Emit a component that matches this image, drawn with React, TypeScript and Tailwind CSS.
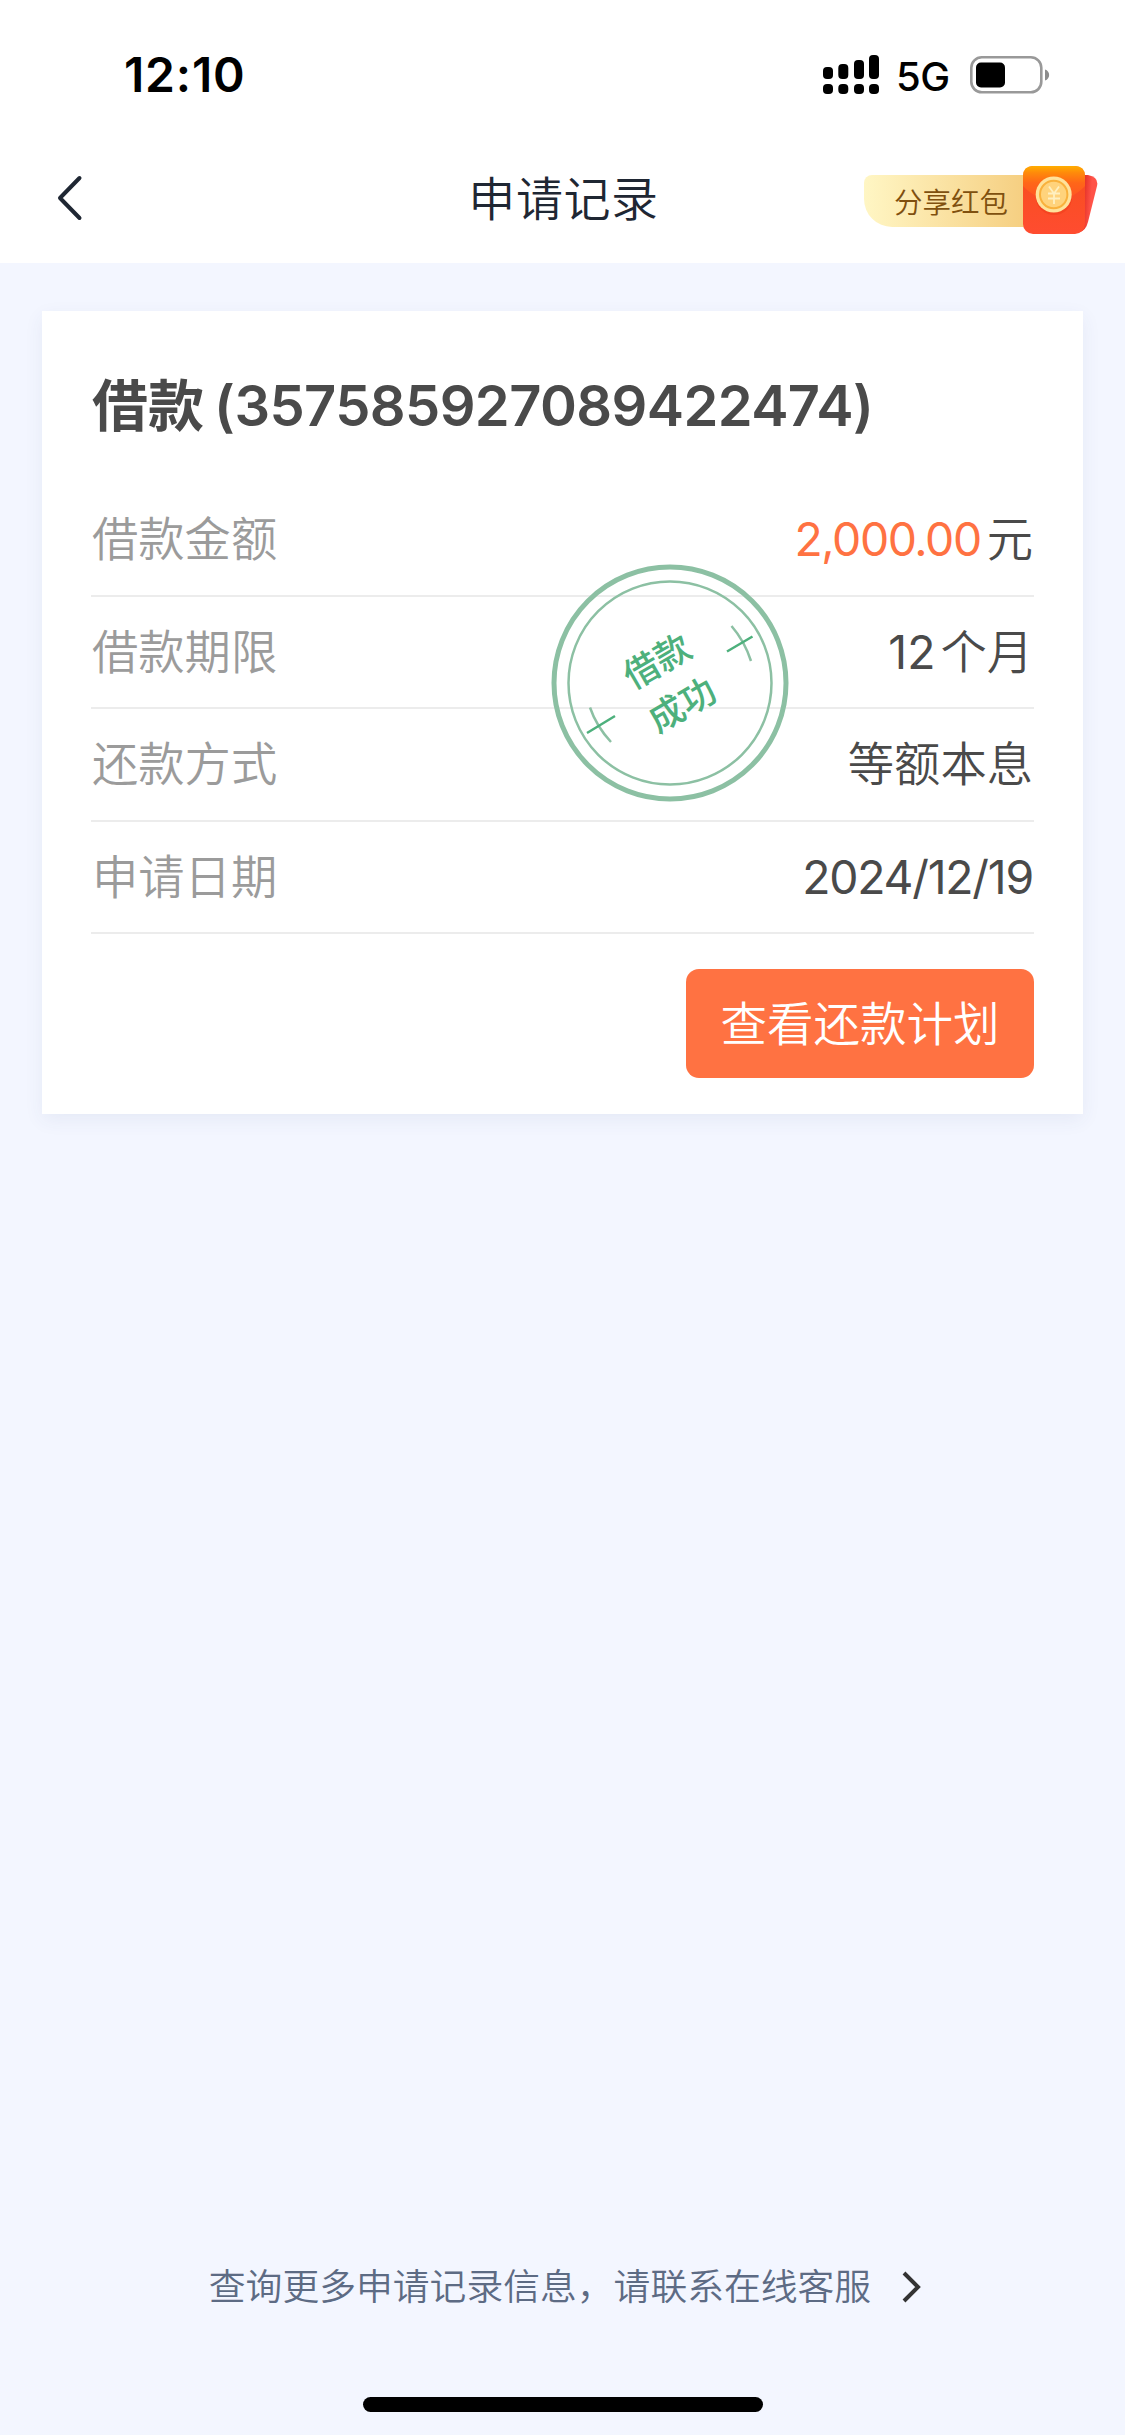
import React from "react";

interface Detail {
  label: string;
  value: React.ReactNode;
}

const details: Detail[] = [
  {
    label: "借款金额",
    value: (
      <>
        <span className="mr-[6px] font-normal tracking-[-1.4px] text-[#ff7242]">
          2,000.00
        </span>
        元
      </>
    ),
  },
  {
    label: "借款期限",
    value: (
      <>
        <span className="mr-[5px] font-normal">12</span>个月
      </>
    ),
  },
  { label: "还款方式", value: "等额本息" },
  {
    label: "申请日期",
    value: (
      <span className="font-normal tracking-[-1.2px]">2024/12/19</span>
    ),
  },
];

const StatusBar = () => (
  <div className="flex h-[150px] items-center justify-between pr-[75px] pl-[124px]">
    <span className="text-[48px] leading-none font-semibold tracking-[0.8px] text-black">
      12:10
    </span>
    <div className="flex items-center">
      <svg width="56" height="40" viewBox="0 0 56 40">
        <rect x="0" y="12" width="10" height="12" rx="4" />
        <rect x="15.3" y="9" width="10" height="15" rx="4" />
        <rect x="31" y="5" width="10" height="19" rx="4" />
        <rect x="46" y="0" width="10" height="24" rx="4" />
        <rect x="0" y="29" width="10" height="10" rx="4" />
        <rect x="15.3" y="29" width="10" height="10" rx="4" />
        <rect x="31" y="29" width="10" height="10" rx="4" />
        <rect x="46" y="29" width="10" height="10" rx="4" />
      </svg>
      <span className="mt-1 ml-[17px] w-[55px] text-[40px] leading-none font-medium tracking-[-0.6px] whitespace-nowrap text-black">
        5G
      </span>
      <svg className="ml-[19px]" width="80" height="38" viewBox="0 0 80 38">
        <rect
          x="1.3"
          y="1.3"
          width="70"
          height="35"
          rx="10.5"
          fill="none"
          stroke="#999"
          strokeWidth="2.6"
        />
        <rect x="6" y="6.5" width="29" height="25" rx="5" />
        <path d="M75 13.500c5.500 1.500 5.500 9.500 0 11z" fill="#8c8c8c" />
      </svg>
    </div>
  </div>
);

const RedPacketIcon = () => (
  <svg
    className="absolute top-0 right-0"
    width="76"
    height="69"
    viewBox="0 0 76 69"
  >
    <defs>
      <linearGradient id="body" x1="0" y1="0" x2="0" y2="1">
        <stop offset="0" stopColor="#ff5a1c" />
        <stop offset="0.3" stopColor="#f94e22" />
        <stop offset="1" stopColor="#ff4c30" />
      </linearGradient>
      <linearGradient id="flap" x1="0" y1="0" x2="0" y2="1">
        <stop offset="0" stopColor="#ffae00" />
        <stop offset="0.2" stopColor="#ff8a0a" />
        <stop offset="0.5" stopColor="#ff6618" />
        <stop offset="1" stopColor="#ff5226" />
      </linearGradient>
      <linearGradient id="back" x1="0" y1="0" x2="1" y2="0.2">
        <stop offset="0.2" stopColor="#e02c22" />
        <stop offset="0.7" stopColor="#ff5348" />
      </linearGradient>
    </defs>
    <path d="M58 9h8q11 2 9 11L66 56q-2 8-8 10z" fill="url(#back)" />
    <rect x="1" y="0" width="62" height="68" rx="10" fill="url(#body)" />
    <path
      d="M1 20V10Q1 0 11 0H53Q63 0 63 10V20Q50 34 32 34T1 20z"
      fill="url(#flap)"
    />
    <ellipse cx="32" cy="32" rx="18" ry="17" fill="#e83410" opacity="0.35" />
    <circle cx="31.7" cy="28.5" r="18" fill="#ffe29a" />
    <circle
      cx="31.7"
      cy="28.5"
      r="13.7"
      fill="#ffd37c"
      stroke="#f9b13c"
      strokeWidth="2"
    />
    <path
      d="M27 20.500l5 7 5-7M32 27v11M26 27.500h12M26 32.500h12"
      fill="none"
      stroke="#fff0c0"
      strokeWidth="1.8"
    />
  </svg>
);

const NavBar = () => (
  <div className="grid h-[113px] grid-cols-3 items-start">
    <svg
      className="mt-[24px] ml-[56px]"
      width="28"
      height="48"
      viewBox="0 0 28 48"
      fill="none"
      stroke="#1f2733"
      strokeWidth="4"
      strokeLinecap="round"
      strokeLinejoin="round"
    >
      <path d="M23.500 4L4 24l19.500 20" />
    </svg>
    <h1 className="mt-[14px] pl-[2px] text-center text-[47px] leading-[70px] font-[350] tracking-[0.6px] text-[#1f2733]">
      申请记录
    </h1>
    <div className="relative mt-4 mr-[27px] h-[69px] w-[234px] justify-self-end pt-[9px]">
      <div className="h-[52px] w-[180px] rounded-tl-[8px] rounded-bl-[28px] bg-linear-to-r from-[#fff6c4] to-[#f4ca78] pt-px pl-[30px] text-[28.5px] leading-[53px] font-[350] text-[#80500f]">
        分享红包
      </div>
      <RedPacketIcon />
    </div>
  </div>
);

const Stamp = () => (
  <div className="absolute top-[252px] left-[508px] flex h-[240px] w-[240px] items-center justify-center">
    <svg
      className="absolute inset-0"
      width="240"
      height="240"
      viewBox="0 0 240 240"
      fill="none"
      stroke="#8cc0a3"
    >
      <circle cx="120" cy="120" r="116" strokeWidth="5" />
      <circle cx="120" cy="120" r="101.5" strokeWidth="2.5" />
      <path d="M181.500 63q13 15 19.500 35" strokeWidth="2.5" />
      <path d="M40 144.500q6.500 19 21 34.500" strokeWidth="2.5" />
      <path
        d="M177 88.500l25.500-15M37 170l28-17"
        stroke="#4db07c"
        strokeWidth="2.5"
      />
    </svg>
    <div className="flex -rotate-30 flex-col gap-[14px] pt-0.5 text-center text-[35.5px] leading-[36px] font-medium text-[#4db07c]">
      <span>借款</span>
      <span>成功</span>
    </div>
  </div>
);

const LoanCard = () => (
  <div className="relative mx-[42px] mt-[48px] h-[803px] bg-white px-[49px] pt-[54px] text-[46.3px] font-[350] text-[#4a4a4a] shadow-[0_6px_18px_rgba(60,70,130,0.07)]">
    <h2 className="h-[119px] pl-px text-[56px] leading-[82px] font-semibold whitespace-nowrap">
      借款{" "}
      <span className="-ml-1 tracking-[-0.6px]">(357585927089422474)</span>
    </h2>
    {details.map((item) => (
      <div
        key={item.label}
        className="flex h-[112.5px] items-center justify-between border-b-2 border-[#ececec] leading-[70px]"
      >
        <span className="pl-px text-[#9b9b9b]">{item.label}</span>
        <span className="pr-px">{item.value}</span>
      </div>
    ))}
    <button className="mt-[35px] ml-auto block h-[109px] w-[348px] rounded-[13px] bg-[#ff7242] pt-0.5 text-[46.5px] leading-[107px] font-[350] text-white">
      查看还款计划
    </button>
    <Stamp />
  </div>
);

const App: React.FC = () => {
  return (
    <div className="flex h-[2435px] w-[1125px] flex-col overflow-hidden bg-[#f3f6ff] font-['Inter','Noto_Sans_CJK_SC',sans-serif]">
      <header className="bg-white">
        <StatusBar />
        <NavBar />
      </header>
      <LoanCard />
      <footer className="mt-auto flex flex-col items-center pb-[23px]">
        <div className="flex h-[60px] items-center gap-[30px] pl-[7px] text-[36.8px] leading-[60px] font-[350] text-[#5d6b84]">
          <span>查询更多申请记录信息，请联系在线客服</span>
          <svg
            width="22"
            height="32"
            viewBox="0 0 22 32"
            fill="none"
            stroke="#333"
            strokeWidth="4"
          >
            <path d="M3 2l14 14L3 30" />
          </svg>
        </div>
        <div className="mt-[80px] h-[15px] w-[400px] rounded-full bg-black" />
      </footer>
    </div>
  );
};

export default App;
